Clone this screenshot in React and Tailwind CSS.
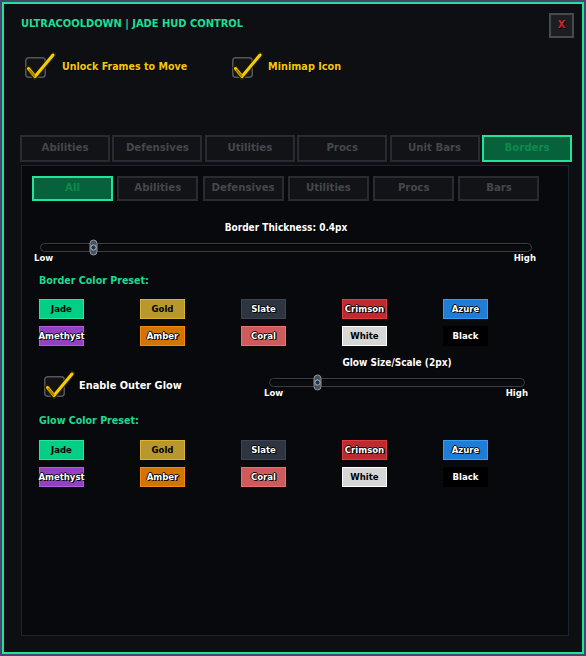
import React from "react";

const narrow = "font-['Liberation_Sans_Narrow','DejaVu_Sans_Condensed',sans-serif]";
const outline = "[text-shadow:1px_1px_0_#000,-1px_0_0_#000,0_-1px_0_#000,1px_0_0_#000]";

const mainTabs = ["Abilities", "Defensives", "Utilities", "Procs", "Unit Bars", "Borders"];
const subTabs = ["All", "Abilities", "Defensives", "Utilities", "Procs", "Bars"];

const presets = [
  { name: "Jade", cls: "bg-[#00cf85] border-[#2ce39d] text-black" },
  { name: "Gold", cls: "bg-[#b8982c] border-[#dbb231] text-black" },
  { name: "Slate", cls: "bg-[#2c3540] border-[#3b4450] text-white " + outline },
  { name: "Crimson", cls: "bg-[#bd2a30] border-[#e23b3e] text-white " + outline },
  { name: "Azure", cls: "bg-[#1e7dd6] border-[#3a9cf0] text-white " + outline },
  { name: "Amethyst", cls: "bg-[#9440c2] border-[#b35ce3] text-white " + outline },
  { name: "Amber", cls: "bg-[#d27400] border-[#f58c12] text-white " + outline },
  { name: "Coral", cls: "bg-[#cf5a5c] border-[#ea7070] text-white " + outline },
  { name: "White", cls: "bg-[#d6d6d6] border-[#ffffff] text-black" },
  { name: "Black", cls: "bg-black border-black text-white " + outline },
];

// gold tick over a dark rounded box, the tick runs past the box on the right
function CheckBox() {
  return (
    <svg width="30" height="28" viewBox="0 0 30 28" className="shrink-0 overflow-visible">
      <rect x="0.75" y="4.75" width="19.5" height="19.5" rx="3" fill="#131315" stroke="#55565a" strokeWidth="1.5" />
      <path d="M3 15 L10 24.5 L28.5 1.5" fill="none" stroke="#2b2100" strokeWidth="5" strokeLinecap="round" strokeLinejoin="round" />
      <path d="M3.5 15.5 L10 23.5 L28 2" fill="none" stroke="#f4d000" strokeWidth="3" strokeLinecap="round" strokeLinejoin="round" />
      <path d="M4.5 17 L9.5 23" fill="none" stroke="#a88200" strokeWidth="2" strokeLinecap="round" />
    </svg>
  );
}

function Slider({ label, trackW, thumbX, lowPad, highPad }) {
  return (
    <div className={`flex flex-col ${trackW}`}>
      <div className="h-[14px] leading-[14px] text-center text-[10px] font-bold text-white [text-shadow:1px_1px_0_#000]">
        {label}
      </div>
      <div className="mt-[4px] relative h-[16px] flex items-center">
        <div className="w-full h-[9px] rounded-full border border-[#3b3d42] bg-[#0a0b0d] shadow-[inset_0_1px_2px_#000]" />
        <svg width="9" height="17" viewBox="0 0 9 17" className="absolute top-0" style={{ left: thumbX }}>
          <rect x="1" y="1" width="7" height="15" rx="3.5" fill="#4a505a" stroke="#8d959f" strokeWidth="1" />
          <circle cx="4.5" cy="8.5" r="2.6" fill="#1b3552" stroke="#c9d0d8" strokeWidth="0.8" />
        </svg>
      </div>
      <div className={`-mt-[3px] h-[12px] leading-[12px] flex justify-between text-[9.5px] font-bold text-white [text-shadow:1px_1px_0_#000] ${lowPad} ${highPad}`}>
        <span>Low</span>
        <span>High</span>
      </div>
    </div>
  );
}

function SwatchGrid() {
  return (
    <div className="ml-[17px] grid grid-cols-[repeat(5,45px)] gap-x-[56px] gap-y-[7px]">
      {presets.map((p) => (
        <div
          key={p.name}
          className={`h-[20px] border flex items-center justify-center text-[9.5px] font-bold whitespace-nowrap ${p.cls}`}
        >
          {p.name}
        </div>
      ))}
    </div>
  );
}

export default function App() {
  return (
    <div className={`w-[586px] h-[656px] p-[2px] bg-[#4a4470] ${narrow}`}>
      <div className="w-full h-full border-2 border-[#1fe39b] bg-[#0e0f13] flex flex-col">
        {/* header */}
        <div className="flex justify-between items-start pt-[9px] pl-[17px] pr-[8px]">
          <div className="mt-[4px] leading-[14px] text-[11px] font-bold text-[#1fdc97]">
            ULTRACOOLDOWN | JADE HUD CONTROL
          </div>
          <button className="w-[25px] h-[25px] border-2 border-[#48494e] bg-[#1d1e22] flex items-center justify-center text-[11px] font-bold text-[#c8282e] [text-shadow:1px_1px_0_#000]">
            X
          </button>
        </div>

        {/* global toggles */}
        <div className="mt-[15px] h-[28px] flex items-center pl-[21px]">
          <div className="w-[207px] flex items-center gap-[7px]">
            <CheckBox />
            <span className="text-[10.6px] font-bold text-[#f3c70f] [text-shadow:1px_1px_0_#000]">Unlock Frames to Move</span>
          </div>
          <div className="flex items-center gap-[6px]">
            <CheckBox />
            <span className="text-[10.8px] font-bold text-[#f3c70f] [text-shadow:1px_1px_0_#000]">Minimap Icon</span>
          </div>
        </div>

        {/* main tabs */}
        <div className="mt-[54px] ml-[16px] w-[552px] grid grid-cols-6 gap-[2.4px]">
          {mainTabs.map((t) => (
            <div
              key={t}
              className={`h-[27px] border-2 flex items-center justify-center text-[11.3px] font-bold ${
                t === "Borders"
                  ? "bg-[#07623b] border-[#22e39c] text-[#0d8a4b]"
                  : "bg-[#121317] border-[#2a2b30] text-[#45464c]"
              }`}
            >
              {t}
            </div>
          ))}
        </div>

        {/* borders panel */}
        <div className="mt-[3px] ml-[17px] w-[548px] h-[471px] border border-[#1c2532] bg-[#07090c] flex flex-col">
          <div className="mt-[10px] ml-[10px] flex gap-[4.3px]">
            {subTabs.map((t) => (
              <div
                key={t}
                className={`w-[81px] h-[25px] border-2 flex items-center justify-center text-[11.3px] font-bold ${
                  t === "All"
                    ? "bg-[#07623b] border-[#22e39c] text-[#0d8a4b]"
                    : "bg-[#121317] border-[#2a2b30] text-[#45464c]"
                }`}
              >
                {t}
              </div>
            ))}
          </div>

          <div className="mt-[20px] ml-[18px]">
            <Slider label="Border Thickness: 0.4px" trackW="w-[492px]" thumbX={49} lowPad="-ml-[6px]" highPad="-mr-[4px]" />
          </div>

          <div className="mt-[9px] ml-[17px] h-[14px] leading-[14px] text-[10.6px] font-bold text-[#1fd98f]">
            Border Color Preset:
          </div>
          <div className="mt-[12px]">
            <SwatchGrid />
          </div>

          {/* outer glow */}
          <div className="mt-[10px] flex items-start">
            <div className="w-[247px] pl-[22px] mt-[16px] flex items-center gap-[5px]">
              <CheckBox />
              <span className="text-[10.9px] font-bold text-white [text-shadow:1px_1px_0_#000]">Enable Outer Glow</span>
            </div>
            <Slider label="Glow Size/Scale (2px)" trackW="w-[256px]" thumbX={44} lowPad="-ml-[5px]" highPad="-mr-[3px]" />
          </div>

          <div className="mt-[13px] ml-[17px] h-[14px] leading-[14px] text-[10.6px] font-bold text-[#1fd98f]">
            Glow Color Preset:
          </div>
          <div className="mt-[13px]">
            <SwatchGrid />
          </div>
        </div>
      </div>
    </div>
  );
}
